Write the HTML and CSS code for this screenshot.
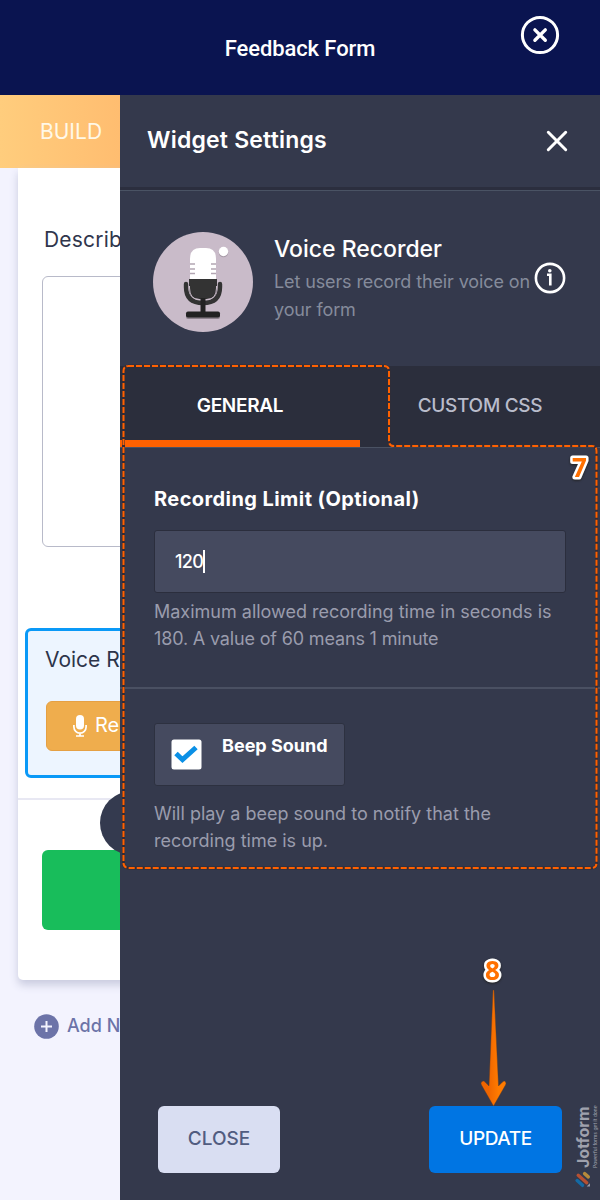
FILE: index.html
```
<!DOCTYPE html>
<html lang="en">
<head>
    <meta charset="utf-8">
    <title>Feedback Form</title>
    <link rel="stylesheet" href="styles.css">
</head>
<body>
    <header class="topbar">
        <h1>Feedback Form</h1>
        <svg class="topbar-close" width="40" height="40" viewBox="0 0 40 40" fill="none" stroke="#fff" stroke-linecap="round">
            <circle cx="20" cy="20" r="17.6" stroke-width="3"/>
            <path d="M14.9 14.9l10.4 10.4M25.3 14.9L14.9 25.3" stroke-width="3.4"/>
        </svg>
    </header>

    <main class="workspace">
        <div class="builder">
            <div class="build-tab">BUILD</div>
            <div class="form-card">
                <div class="field-label">Describ</div>
                <div class="textarea"></div>
                <div class="selected-field">
                    <div class="selected-label">Voice R</div>
                    <div class="record-button">
                        <svg width="14" height="22" viewBox="0 0 14 22">
                            <rect x="3" y="0" width="8" height="14.5" rx="4" fill="#fff"/>
                            <path d="M.9 10v2a6.1 6.1 0 0 0 12.2 0v-2M7 18v3M3 21h8" fill="none" stroke="#fff" stroke-width="1.7"/>
                        </svg>
                        <span>Re</span>
                    </div>
                </div>
                <div class="submit-row">
                    <div class="round-handle"></div>
                    <div class="submit-button"></div>
                </div>
            </div>
            <div class="add-page">
                <svg width="25" height="25" viewBox="0 0 25 25">
                    <circle cx="12.5" cy="12.5" r="12.3" fill="#6c73a8"/>
                    <path d="M12.5 7v11M7 12.5h11" stroke="#f3f3fe" stroke-width="2"/>
                </svg>
                <span>Add N</span>
            </div>
        </div>

        <aside class="panel">
            <div class="panel-head">
                <h2>Widget Settings</h2>
                <svg width="22" height="22" viewBox="0 0 22 22" stroke="#fff" stroke-width="3" stroke-linecap="round">
                    <path d="M2.300 2.300l17.400 17.400M19.700 2.300L2.300 19.700"/>
                </svg>
            </div>

            <div class="widget">
                <svg class="widget-icon" width="100" height="100" viewBox="0 0 100 100">
                    <circle cx="50" cy="50" r="50" fill="#c9bbc9"/>
                    <circle cx="70.5" cy="20.5" r="4.8" fill="#a99ca9"/>
                    <circle cx="70.5" cy="19.5" r="4.7" fill="#fff"/>
                    <path d="M37 47V27q0-11 10-11h6q10 0 10 11v20z" fill="#fff"/>
                    <path d="M37 32h5M37 37h5M37 41.5h5M58 32h5M58 37h5M58 41.5h5" stroke="#b3a6b3" stroke-width="1.6"/>
                    <path d="M36 47h28v9q0 11-10 11h-8q-10 0-10-11z" fill="#333"/>
                    <path d="M33 52v3q0 16 17 16t17-16v-3" fill="none" stroke="#333" stroke-width="4.4" stroke-linecap="round"/>
                    <path d="M36.500 54v2q0 11.500 10 11.500h7q10 0 10-11.500v-2" fill="none" stroke="#c9bbc9" stroke-width="1"/>
                    <path d="M50 66v15" stroke="#222" stroke-width="5"/>
                    <rect x="33" y="81" width="34" height="6" rx="2" fill="#8d828d"/>
                    <rect x="33" y="79.5" width="34" height="6" rx="2" fill="#222"/>
                </svg>
                <div class="widget-text">
                    <h3>Voice Recorder</h3>
                    <p>Let users record their voice on<br>your form</p>
                </div>
                <svg class="info" width="32" height="32" viewBox="0 0 32 32" fill="none" stroke="#fff">
                    <circle cx="16" cy="16" r="14.1" stroke-width="2.6"/>
                    <path d="M13 12.8h3.3v10.7" stroke-width="2.6"/>
                    <circle cx="15.8" cy="8.8" r="1.8" fill="#fff" stroke="none"/>
                </svg>
            </div>

            <div class="tabs">
                <div class="tab active">GENERAL</div>
                <div class="tab">CUSTOM CSS</div>
            </div>

            <section class="limit">
                <h4>Recording Limit (Optional)</h4>
                <div class="input"><span>120</span><i class="caret"></i></div>
                <p class="hint">Maximum allowed recording time in seconds is<br><span class="tight">180. A value of 60 means 1 minute</span></p>
            </section>

            <section class="beep">
                <div class="check-box">
                    <svg width="31" height="31" viewBox="0 0 31 31">
                        <rect x=".5" y=".5" width="30" height="30" rx="2.5" fill="#fff"/>
                        <path d="M5 14.500l6.500 6.200L25 8.500" fill="none" stroke="#0b90e6" stroke-width="5"/>
                    </svg>
                    <span>Beep Sound</span>
                </div>
                <p class="hint">Will play a beep sound to notify that the<br>recording time is up.</p>
            </section>

            <footer class="actions">
                <div class="btn close">CLOSE</div>
                <div class="btn update">UPDATE</div>
            </footer>
        </aside>
    </main>

    <svg class="annotations" width="600" height="1200" viewBox="0 0 600 1200">
        <defs>
            <linearGradient id="arrow" x1="0" x2="1" y1="0" y2="0">
                <stop offset=".3" stop-color="#ef6500"/>
                <stop offset=".7" stop-color="#ff7b00"/>
            </linearGradient>
        </defs>
        <path class="dash-shadow" d="M128 366H384q5 0 5 5V441q0 5 5 5H592q4.500 0 4.500 5V863q0 5-5 5H129q-5.500 0-5.500-5V371q0-5 5-5z"/>
        <path class="dash" d="M128 366H384q5 0 5 5V441q0 5 5 5H592q4.500 0 4.500 5V863q0 5-5 5H129q-5.500 0-5.500-5V371q0-5 5-5z"/>
        <path d="M493 990h1l4.500 96 4-4q2-2 3 0 1 1 0 3L493.500 1106 481.500 1085q-1-2 0-3 2-2 3.500 0l4 4z" fill="url(#arrow)" stroke="#5b3a27" stroke-width=".4"/>
        <text class="step" x="572" y="477">7</text>
        <text class="step" x="485" y="980">8</text>
    </svg>

    <div class="watermark">
        <svg width="17" height="16" viewBox="0 0 16 15" stroke-width="3.200" stroke-linecap="round">
            <path d="M2.500 7l4.500-5" stroke="#146aa4"/>
            <path d="M5 11l7-8" stroke="#b65032"/>
            <path d="M10.500 12.500l3-3.500" stroke="#b68a3b"/>
            <path d="M1.500 11v3h3z" fill="#9a9ca9" stroke="none"/>
        </svg>
        <div class="watermark-text">
            <b>Jotform</b>
            <small>Powerful forms get it done</small>
        </div>
    </div>
</body>
</html>
```
FILE: styles.css
```
* {
    box-sizing: border-box;
}
body {
    position: relative;
    width: 600px;
    height: 1200px;
    margin: 0;
    overflow: hidden;
    font-family: Inter, "Liberation Sans", sans-serif;
    white-space: nowrap;
}
h1, h2, h3, h4, p {
    margin: 0;
}
svg {
    display: block;
    flex: none;
}
.topbar {
    position: relative;
    height: 95px;
    background: #0a1450;
    color: #fff;
    text-align: center;
}
.topbar h1 {
    font: 500 22px/97px Roboto, sans-serif;
    letter-spacing: -0.1px;
}
.topbar-close {
    position: absolute;
    left: 520px;
    top: 15px;
}
.workspace {
    display: flex;
    height: 1105px;
}

/* form builder behind the panel */
.builder {
    width: 120px;
    overflow: hidden;
    background: #f3f3fe;
}
.build-tab {
    height: 73px;
    padding-left: 40px;
    background: linear-gradient(90deg, #ffcd7d, #ffbd70);
    color: #fff8e8;
    font-size: 21px;
    line-height: 73px;
}
.form-card {
    width: 560px;
    height: 812px;
    margin-left: 18px;
    padding-top: 57px;
    border-radius: 0 0 5px 5px;
    background: #fff;
    box-shadow: 0 5px 8px #c9cbdf;
}
.field-label {
    height: 51px;
    padding-left: 26px;
    color: #30364c;
    font-size: 21px;
    line-height: 30px;
    letter-spacing: 0.2px;
}
.textarea {
    width: 500px;
    height: 271px;
    margin-left: 24px;
    border: 1.500px solid #b8bac9;
    border-radius: 6px;
}
.selected-field {
    width: 540px;
    height: 150px;
    margin: 81px 0 0 7px;
    padding: 14px 0 0 18px;
    border: 3px solid #0a99f7;
    border-radius: 6px;
    background: #edf5ff;
    color: #2d344a;
    font-size: 21px;
}
.selected-label {
    margin-left: -1px;
    line-height: 29px;
}
.record-button {
    display: flex;
    gap: 8px;
    height: 50px;
    margin-top: 27px;
    padding: 13px 0 0 26px;
    border: 1px solid #e5a044;
    border-radius: 6px;
    background: #efad4d;
    color: #fff;
    font-size: 20px;
    line-height: 21px;
}
.submit-row {
    position: relative;
    height: 132px;
    margin-top: 20px;
    padding: 50px 0 0 24px;
    border-top: 2px solid #e8e8f3;
}
.round-handle {
    position: absolute;
    left: 82px;
    top: -9px;
    width: 64px;
    height: 64px;
    border-radius: 50%;
    background: #343a4f;
}
.submit-button {
    width: 500px;
    height: 80px;
    border-radius: 6px;
    background: #18bd5b;
}
.add-page {
    display: flex;
    align-items: center;
    gap: 8px;
    margin: 34px 0 0 34px;
    color: #6c73a8;
    font-size: 18px;
    font-weight: 500;
}
.add-page span {
    margin-top: -2px;
}

/* settings panel */
.panel {
    display: flex;
    flex-direction: column;
    width: 480px;
    background: #34394c;
    color: #fff;
}
.panel-head {
    display: flex;
    justify-content: space-between;
    height: 96px;
    padding: 30px 32px 0 27px;
    border-bottom: 1px solid #4a5364;
    box-shadow: inset 0 -3px #2b2e3e;
}
.panel-head h2 {
    font-size: 23px;
    font-weight: 600;
    line-height: 30px;
    letter-spacing: 0.2px;
}
.panel-head svg {
    margin-top: 5px;
}
.widget {
    display: flex;
    height: 175px;
    padding: 41px 0 0 33px;
}
.widget-text {
    width: 260px;
    margin-left: 21px;
}
.widget h3 {
    font-size: 23px;
    font-weight: 500;
    line-height: 35px;
}
.widget p {
    margin-top: 1px;
    color: #858b9b;
    font-size: 18px;
    line-height: 28px;
    letter-spacing: -0.12px;
}
.info {
    margin: 30px 0 0;
}
.tabs {
    display: grid;
    grid-template-columns: 1fr 1fr;
    height: 82px;
    border-bottom: 1px solid #4a5263;
    background: #2b2e3c;
    font-size: 19px;
    font-weight: 500;
    line-height: 80px;
    text-align: center;
}
.tab {
    height: 81px;
    color: #b9bccb;
    letter-spacing: -0.3px;
}
.tab.active {
    border-bottom: 7px solid #ff6100;
    color: #fff;
    font-weight: 600;
}
.limit {
    height: 241px;
    padding: 36px 34px 0;
    border-bottom: 2px solid #4a5062;
}
.limit h4 {
    font-size: 20px;
    font-weight: 700;
    line-height: 31px;
    letter-spacing: 0.42px;
}
.input {
    display: flex;
    align-items: center;
    height: 63px;
    margin-top: 15px;
    padding-left: 20px;
    border: 1px solid #2b2e3d;
    border-radius: 3px;
    background: #454a5f;
    font-size: 18px;
    font-weight: 500;
    letter-spacing: -0.7px;
}
.caret {
    width: 2px;
    height: 23px;
    background: #fff;
}
.hint {
    margin-top: 5px;
    color: #9a9cad;
    font-size: 18px;
    line-height: 27px;
}
.tight {
    letter-spacing: -0.16px;
}
.beep {
    padding: 34px 34px 0;
}
.check-box {
    display: flex;
    width: 191px;
    height: 63px;
    padding: 15px 0 0 16px;
    border: 1px solid #2d3140;
    border-radius: 3px;
    background: #454a5f;
    font-size: 18px;
    font-weight: 700;
}
.check-box span {
    margin: -4px 0 0 20px;
    line-height: 22px;
}
.beep .hint {
    margin-top: 14px;
}
.actions {
    display: flex;
    justify-content: space-between;
    margin-top: auto;
    padding: 0 38px 27px 38px;
}
.btn {
    width: 122px;
    height: 67px;
    border-radius: 6px;
    background: #d9def2;
    color: #515c80;
    font-size: 19px;
    font-weight: 500;
    line-height: 65px;
    text-align: center;
}
.btn.update {
    width: 133px;
    background: #0075e3;
    color: #fff;
    letter-spacing: -0.4px;
}

/* tutorial marks over the page */
.annotations {
    position: absolute;
    left: 0;
    top: 0;
}
.dash, .dash-shadow {
    fill: none;
    stroke: #ff6100;
    stroke-width: 2;
    stroke-dasharray: 6 2;
}
.dash-shadow {
    stroke: #352c35;
    stroke-width: 3;
    stroke-dasharray: none;
}
.step {
    fill: #ff7000;
    stroke: #fff;
    stroke-width: 5px;
    stroke-linejoin: round;
    paint-order: stroke;
    font: 700 26px "Open Sans", sans-serif;
    filter: drop-shadow(0 1px 1px #222);
}
.watermark {
    position: absolute;
    left: 575px;
    top: 1188px;
    display: flex;
    gap: 3px;
    transform: rotate(-90deg);
    transform-origin: 0 0;
    color: #9fa1ad;
}
.watermark-text {
    display: flex;
    flex-direction: column;
}
.watermark b {
    font-size: 16px;
    line-height: 17px;
}
.watermark small {
    font-size: 5px;
    line-height: 6px;
}
```
